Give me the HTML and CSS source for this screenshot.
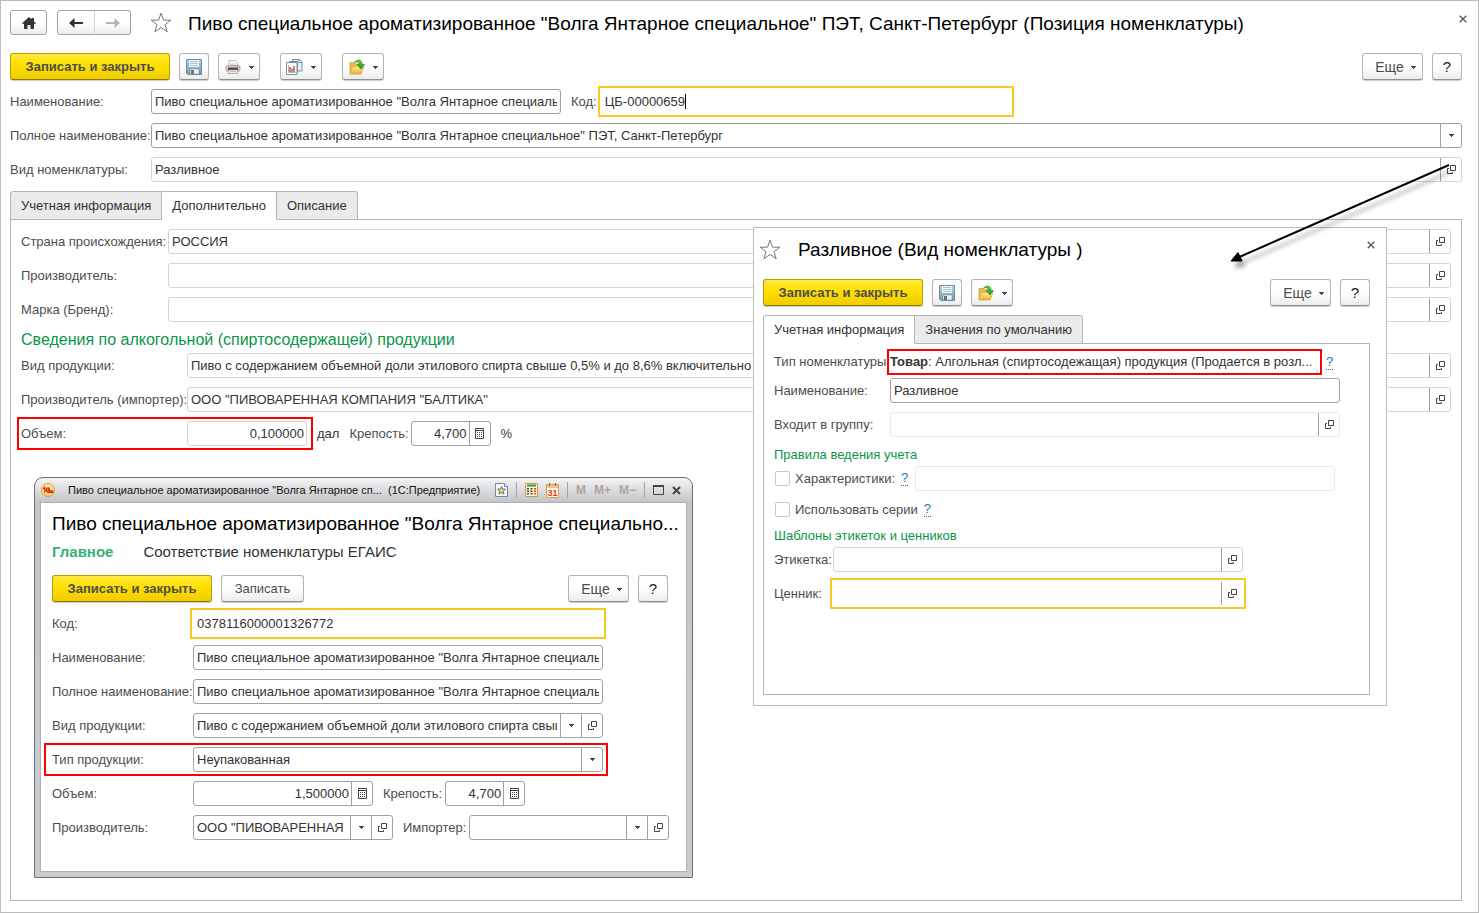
FILE: index.html
```html
<!DOCTYPE html>
<html lang="ru">
<head>
<meta charset="utf-8">
<title>Позиция номенклатуры</title>
<link rel="stylesheet" href="styles.css">
</head>
<body>
<svg class="sprite" aria-hidden="true">
  <defs>
    <linearGradient id="g-blue" x1="0" y1="0" x2="0" y2="1"><stop offset="0" stop-color="#b9d3e6"/><stop offset="1" stop-color="#6f93ad"/></linearGradient>
    <linearGradient id="g-folder" x1="0" y1="0" x2="0" y2="1"><stop offset="0" stop-color="#ffe693"/><stop offset="1" stop-color="#f2b632"/></linearGradient>
    <linearGradient id="g-green" x1="0" y1="0" x2="0" y2="1"><stop offset="0" stop-color="#6fd04a"/><stop offset="1" stop-color="#1d9a1d"/></linearGradient>
    <radialGradient id="g-logo" cx="50%" cy="35%" r="65%"><stop offset="0" stop-color="#fffbd0"/><stop offset="1" stop-color="#f8cf45"/></radialGradient>
  </defs>
  <symbol id="i-open" viewBox="0 0 9 9"><path d="M3.500 .5h5v5h-5zM2 3.500H.5v5h5V7" fill="none" stroke="#444"/></symbol>
  <symbol id="i-down" viewBox="0 0 5 3"><path d="M0 0h5v1H4v1H3v1H2V2H1V1H0z" fill="#444"/></symbol>
  <symbol id="i-calc" viewBox="0 0 9 11"><path d="M.5.500h8v10h-8zM1 2.500h7" fill="none" stroke="#444"/><path d="M2 4h1v1H2zM4 4h1v1H4zM6 4h1v1H6zM2 6h1v1H2zM4 6h1v1H4zM6 6h1v1H6zM2 8h1v1H2zM4 8h1v1H4zM6 8h1v1H6z" fill="#444"/></symbol>
  <symbol id="i-close" viewBox="0 0 8 8"><path d="M.7.700l6.600 6.600M7.300.700L.7 7.300" stroke="#555" stroke-width="1.300"/></symbol>
  <symbol id="i-star" viewBox="0 0 22 21"><path d="M11 1.200l2.500 7h7.400l-5.900 4.500 2.200 7.100L11 15.500l-6.200 4.300L7 12.700 1.100 8.200h7.400z" fill="#fff" stroke="#777" stroke-width="1"/></symbol>
  <symbol id="i-save" viewBox="0 0 16 16"><path d="M.5.500h15v15H2l-1.500-1.500z" fill="url(#g-blue)" stroke="#6d8fa6"/><path d="M3 1h10v7H3z" fill="#f4f9fc"/><path d="M4 2.500h8M4 4.500h8M4 6.500h8" stroke="#a8bfce"/><path d="M4 10h9v5H4z" fill="#f0f4f6" stroke="#7b92a2" stroke-width=".6"/><path d="M5 11h3v4H5z" fill="#5c7688"/></symbol>
  <symbol id="i-print" viewBox="0 0 16 16"><path d="M4 7V1.500h6.500L12.500 4v3" fill="#fff" stroke="#b4bac2"/><path d="M5.500 4h5M5.500 5.500h5" stroke="#c4cad2" stroke-width=".7"/><rect x="1" y="6.500" width="14" height="6" rx="2" fill="#d6d0cb" stroke="#9d9691" stroke-width=".8"/><path d="M3 8.500h10v2.500H3z" fill="#4a4745"/><path d="M4 11h8l1 3.500H3z" fill="#f6f6f6" stroke="#a09a96" stroke-width=".7"/><path d="M5 12.700h6" stroke="#e0a27a"/><circle cx="13" cy="7.800" r=".7" fill="#d8643c"/></symbol>
  <symbol id="i-report" viewBox="0 0 17 16"><path d="M6.500.500h7l2.500 2.500v9H6.500z" fill="#e9f1f7" stroke="#6d93ad"/><path d="M13 .5V3.500h3" fill="#fff" stroke="#6d93ad"/><path d="M3.500 2.500h8v11h-8z" fill="#e9f1f7" stroke="#6d93ad"/><path d="M.5 3.500h10.500v12H.5z" fill="#fff" stroke="#6d93ad"/><path d="M2.500 6v7.500h7" fill="none" stroke="#8aa5b8" stroke-width=".8"/><path d="M4 8v5" stroke="#d9372b" stroke-width="1.400"/><path d="M6 9.500V13" stroke="#3d9f3a" stroke-width="1.400"/><path d="M8 7v6" stroke="#d9372b" stroke-width="1.400"/></symbol>
  <symbol id="i-folder" viewBox="0 0 16 16"><path d="M1 3.500h4.500L7 5h5v2.500h2.500L12 15H1z" fill="#eebb48" stroke="#d29a2c" stroke-width=".7"/><path d="M1 15L3.500 7.500h11.500L12.500 13.500z" fill="url(#g-folder)" stroke="#dfac40" stroke-width=".7"/><path d="M5.500 3.200C8-.2 12.800.3 13.300 5.500h2.200L12 10 8.200 5.500h2.300C10.300 3.200 8 2.200 5.500 3.200z" fill="url(#g-green)" stroke="#198519" stroke-width=".6"/></symbol>
</svg>

<main class="page">
  <header class="topbar">
    <button class="btn btn-nav" aria-label="Начальная страница"><svg width="14" height="12" viewBox="0 0 14 12"><path d="M7 0l2.500 2.200V1H12v3.500L14 6.300 13.200 7.200 12 6.200V12H8.500V8h-3v4H2V6.200L.8 7.200 0 6.300z" fill="#333"/></svg></button>
    <div class="nav-pair">
      <button class="btn btn-nav" aria-label="Назад"><svg width="14" height="10" viewBox="0 0 14 10"><path d="M14 4H5.500V0L0 5l5.500 5V6H14z" fill="#333"/></svg></button>
      <button class="btn btn-nav" aria-label="Вперед"><svg width="14" height="10" viewBox="0 0 14 10"><path d="M0 4h8.500V0L14 5l-5.500 5V6H0z" fill="#b4b4b4"/></svg></button>
    </div>
    <svg class="star" width="22" height="21"><use href="#i-star"/></svg>
    <h1 class="title">Пиво специальное ароматизированное "Волга Янтарное специальное" ПЭТ, Санкт-Петербург (Позиция номенклатуры)</h1>
    <button class="close" aria-label="Закрыть"><svg width="8" height="8"><use href="#i-close"/></svg></button>
  </header>

  <div class="commands">
    <button class="btn btn-main">Записать и закрыть</button>
    <button class="btn btn-icon" aria-label="Сохранить"><svg width="16" height="16"><use href="#i-save"/></svg></button>
    <button class="btn btn-menu" aria-label="Печать"><svg width="16" height="16"><use href="#i-print"/></svg><svg width="5" height="3"><use href="#i-down"/></svg></button>
    <button class="btn btn-menu apart" aria-label="Отчеты"><svg width="17" height="16"><use href="#i-report"/></svg><svg width="5" height="3"><use href="#i-down"/></svg></button>
    <button class="btn btn-menu apart" aria-label="Создать на основании"><svg width="16" height="16"><use href="#i-folder"/></svg><svg width="5" height="3"><use href="#i-down"/></svg></button>
    <button class="btn btn-more">Еще<svg width="5" height="3"><use href="#i-down"/></svg></button>
    <button class="btn btn-icon">?</button>
  </div>

  <section class="rows head-rows">
    <div class="row">
      <label for="m-name">Наименование:</label>
      <div class="field w-long"><input id="m-name" value="Пиво специальное ароматизированное &quot;Волга Янтарное специальное&quot; ПЭТ, Санкт-Петербург"></div>
      <label class="inline" for="m-code">Код:</label>
      <div class="field w-long focused"><input id="m-code" value="ЦБ-00000659"><i class="caret"></i></div>
    </div>
    <div class="row">
      <label for="m-full">Полное наименование:</label>
      <div class="field grow"><input id="m-full" value="Пиво специальное ароматизированное &quot;Волга Янтарное специальное&quot; ПЭТ, Санкт-Петербург"><button aria-label="Выбрать"><svg width="5" height="3"><use href="#i-down"/></svg></button></div>
    </div>
    <div class="row">
      <label for="m-kind">Вид номенклатуры:</label>
      <div class="field grow soft"><input id="m-kind" value="Разливное"><button aria-label="Открыть"><svg width="9" height="9"><use href="#i-open"/></svg></button></div>
    </div>
  </section>

  <nav class="tabs">
    <button class="tab">Учетная информация</button>
    <button class="tab active">Дополнительно</button>
    <button class="tab">Описание</button>
  </nav>
  <section class="panel main-panel">
    <div class="rows origin-rows">
      <div class="row"><label for="p-country">Страна происхождения:</label><div class="field grow soft"><input id="p-country" value="РОССИЯ"><button aria-label="Открыть"><svg width="9" height="9"><use href="#i-open"/></svg></button></div></div>
      <div class="row"><label for="p-maker">Производитель:</label><div class="field grow soft"><input id="p-maker"><button aria-label="Открыть"><svg width="9" height="9"><use href="#i-open"/></svg></button></div></div>
      <div class="row"><label for="p-brand">Марка (Бренд):</label><div class="field grow soft"><input id="p-brand"><button aria-label="Открыть"><svg width="9" height="9"><use href="#i-open"/></svg></button></div></div>
    </div>
    <h2 class="group group-large">Сведения по алкогольной (спиртосодержащей) продукции</h2>
    <div class="rows alcohol-rows">
      <div class="row"><label for="p-type">Вид продукции:</label><div class="field grow soft"><input id="p-type" value="Пиво с содержанием объемной доли этилового спирта свыше 0,5% и до 8,6% включительно"><button aria-label="Открыть"><svg width="9" height="9"><use href="#i-open"/></svg></button></div></div>
      <div class="row"><label for="p-importer">Производитель (импортер):</label><div class="field grow soft"><input id="p-importer" value="ООО &quot;ПИВОВАРЕННАЯ КОМПАНИЯ &quot;БАЛТИКА&quot;"><button aria-label="Открыть"><svg width="9" height="9"><use href="#i-open"/></svg></button></div></div>
      <div class="row">
        <div class="row marked volume-mark"><label for="p-volume">Объем:</label><div class="field soft w-volume"><input class="num" id="p-volume" value="0,100000"></div></div>
        <span class="unit">дал</span>
        <label class="inline" for="p-strength">Крепость:</label>
        <div class="field w-num"><input class="num" id="p-strength" value="4,700"><button aria-label="Калькулятор"><svg width="9" height="11"><use href="#i-calc"/></svg></button></div>
        <span class="unit">%</span>
      </div>
    </div>
  </section>

  <section class="dialog kind-dialog">
    <header class="topbar">
      <svg class="star" width="22" height="21"><use href="#i-star"/></svg>
      <h2 class="title">Разливное (Вид номенклатуры )</h2>
      <button class="close" aria-label="Закрыть"><svg width="8" height="8"><use href="#i-close"/></svg></button>
    </header>
    <div class="commands">
      <button class="btn btn-main">Записать и закрыть</button>
      <button class="btn btn-icon" aria-label="Сохранить"><svg width="16" height="16"><use href="#i-save"/></svg></button>
      <button class="btn btn-menu" aria-label="Создать на основании"><svg width="16" height="16"><use href="#i-folder"/></svg><svg width="5" height="3"><use href="#i-down"/></svg></button>
      <button class="btn btn-more">Еще<svg width="5" height="3"><use href="#i-down"/></svg></button>
      <button class="btn btn-icon">?</button>
    </div>
    <nav class="tabs">
      <button class="tab active">Учетная информация</button>
      <button class="tab">Значения по умолчанию</button>
    </nav>
    <div class="panel kind-panel">
      <div class="row type-row"><span class="label">Тип номенклатуры:</span><span class="marked type-value"><b>Товар</b>: Алгольная (спиртосодежащая) продукция (Продается в розл...</span><a class="hint" href="#">?</a></div>
      <div class="rows">
        <div class="row"><label for="k-name">Наименование:</label><div class="field w-wide"><input id="k-name" value="Разливное"></div></div>
        <div class="row"><label for="k-group">Входит в группу:</label><div class="field faint w-wide"><input id="k-group"><button aria-label="Открыть"><svg width="9" height="9"><use href="#i-open"/></svg></button></div></div>
      </div>
      <h3 class="group">Правила ведения учета</h3>
      <div class="row check-row"><input type="checkbox" id="k-feat"><label class="inline" for="k-feat">Характеристики:</label><a class="hint" href="#">?</a><div class="field faint feature-field"><input aria-label="Характеристики"></div></div>
      <div class="row check-row series-row"><input type="checkbox" id="k-series"><label class="inline" for="k-series">Использовать серии</label><a class="hint" href="#">?</a></div>
      <h3 class="group">Шаблоны этикеток и ценников</h3>
      <div class="rows template-rows">
        <div class="row"><label for="k-label">Этикетка:</label><div class="field soft w-long"><input id="k-label"><button aria-label="Открыть"><svg width="9" height="9"><use href="#i-open"/></svg></button></div></div>
        <div class="row"><label for="k-price">Ценник:</label><div class="field w-long focused"><input id="k-price"><button aria-label="Открыть"><svg width="9" height="9"><use href="#i-open"/></svg></button></div></div>
      </div>
    </div>
  </section>

  <section class="window">
    <header class="caption">
      <svg width="14" height="14" viewBox="0 0 14 14"><circle cx="7" cy="7" r="6.500" fill="url(#g-logo)" stroke="#d8a33a"/><path d="M2 5.800L3.800 4.500V9.500M8.800 5.600C7.800 4.200 5.200 4.800 5.300 7c.1 2 1.700 2.300 3 2.300h4M8.800 6.800c-.8-.8-1.800-.4-1.800.3 0 .6.500.8 1.200.8h4" fill="none" stroke="#d8201c" stroke-width="1.300"/></svg>
      <span class="caption-text">Пиво специальное ароматизированное "Волга Янтарное сп...&nbsp; (1С:Предприятие)</span>
      <div class="caption-tools">
        <button aria-label="Избранное"><svg width="13" height="14" viewBox="0 0 13 14"><path d="M.5.500h9l3 3v10H.5z" fill="#eef5fb" stroke="#6f8ca5"/><path d="M9.500.500v3h3" fill="#fff" stroke="#6f8ca5"/><path d="M6.500 3.500l1.100 2.600 2.800.2-2.100 1.900.6 2.800-2.400-1.500L4.100 11l.6-2.800-2.100-1.900 2.800-.2z" fill="#fbd27a" stroke="#555" stroke-width=".8"/></svg></button>
        <i class="sep"></i>
        <button aria-label="Калькулятор"><svg width="13" height="14" viewBox="0 0 13 14"><path d="M.5.500h12v13H.5z" fill="#fdf1cf" stroke="#c69a5c"/><path d="M2 1.500h9v2H2z" fill="#2f9e3b"/><path d="M2 5h2v1.500H2zM5.500 5h2v1.500h-2zM2 7.500h2V9H2zM5.500 7.500h2V9h-2zM2 10h2v1.500H2zM5.500 10h2v1.500h-2z" fill="#4a4a4a"/><path d="M9 5h2v1.500H9zM9 7.500h2V9H9zM9 10h2v1.500H9z" fill="#c9482c"/></svg></button>
        <button aria-label="Календарь"><svg width="13" height="15" viewBox="0 0 13 15"><path d="M.5 1.500h12v13H.5z" fill="#fff6e2" stroke="#d09a62"/><path d="M1 2h11v3H1z" fill="#f0bd84"/><path d="M3.500 0v3M9.500 0v3" stroke="#8a6a4a"/><text x="6.500" y="13" text-anchor="middle" class="cal-day">31</text></svg></button>
        <i class="sep"></i>
        <button class="mem">M</button><button class="mem">M+</button><button class="mem">M−</button>
        <i class="sep"></i>
        <button aria-label="Развернуть"><svg width="11" height="10" viewBox="0 0 11 10"><path d="M.5 1v8.500h10V1" fill="none" stroke="#444"/><path d="M0 1h11" stroke="#444" stroke-width="2"/></svg></button>
        <button aria-label="Закрыть"><svg width="9" height="9" viewBox="0 0 9 9"><path d="M1 1l7 7M8 1L1 8" stroke="#444" stroke-width="2"/></svg></button>
      </div>
    </header>
    <div class="window-body">
      <h2 class="title">Пиво специальное ароматизированное "Волга Янтарное специально...</h2>
      <nav class="links"><a class="current" href="#">Главное</a><a href="#">Соответствие номенклатуры ЕГАИС</a></nav>
      <div class="commands">
        <button class="btn btn-main">Записать и закрыть</button>
        <button class="btn btn-plain">Записать</button>
        <button class="btn btn-more">Еще<svg width="5" height="3"><use href="#i-down"/></svg></button>
        <button class="btn btn-icon">?</button>
      </div>
      <div class="rows">
        <div class="row"><label for="w-code">Код:</label><div class="field w-long focused"><input id="w-code" value="0378116000001326772"></div></div>
        <div class="row"><label for="w-name">Наименование:</label><div class="field w-long"><input id="w-name" value="Пиво специальное ароматизированное &quot;Волга Янтарное специальное&quot; ПЭТ, Санкт-Петербург"></div></div>
        <div class="row"><label for="w-full">Полное наименование:</label><div class="field w-long"><input id="w-full" value="Пиво специальное ароматизированное &quot;Волга Янтарное специальное&quot; ПЭТ, Санкт-Петербург"></div></div>
        <div class="row"><label for="w-kind">Вид продукции:</label><div class="field w-long"><input id="w-kind" value="Пиво с содержанием объемной доли этилового спирта свыше 0,5% и до 8,6% включительно"><button aria-label="Выбрать"><svg width="5" height="3"><use href="#i-down"/></svg></button><button aria-label="Открыть"><svg width="9" height="9"><use href="#i-open"/></svg></button></div></div>
        <div class="row marked pack-row"><label for="w-pack">Тип продукции:</label><div class="field w-long"><select id="w-pack"><option>Неупакованная</option></select><span class="drop"><svg width="5" height="3"><use href="#i-down"/></svg></span></div></div>
        <div class="row"><label for="w-volume">Объем:</label><div class="field w-amount"><input class="num" id="w-volume" value="1,500000"><button aria-label="Калькулятор"><svg width="9" height="11"><use href="#i-calc"/></svg></button></div><label class="inline" for="w-strength">Крепость:</label><div class="field w-num"><input class="num" id="w-strength" value="4,700"><button aria-label="Калькулятор"><svg width="9" height="11"><use href="#i-calc"/></svg></button></div></div>
        <div class="row"><label for="w-maker">Производитель:</label><div class="field w-ref"><input id="w-maker" value="ООО &quot;ПИВОВАРЕННАЯ"><button aria-label="Выбрать"><svg width="5" height="3"><use href="#i-down"/></svg></button><button aria-label="Открыть"><svg width="9" height="9"><use href="#i-open"/></svg></button></div><label class="inline" for="w-importer">Импортер:</label><div class="field w-ref"><input id="w-importer"><button aria-label="Выбрать"><svg width="5" height="3"><use href="#i-down"/></svg></button><button aria-label="Открыть"><svg width="9" height="9"><use href="#i-open"/></svg></button></div></div>
      </div>
    </div>
  </section>

  <svg class="arrow" width="230" height="114" viewBox="0 0 230 114" aria-hidden="true"><path d="M222 5L10 98" stroke="#000" stroke-width="2"/><path d="M4 101L11 92.500 15 101z" fill="#000" stroke="#000"/></svg>
</main>
</body>
</html>
```
FILE: styles.css
```css
* { box-sizing: border-box; }
body {
  margin: 0;
  background: #fff;
  color: #333;
  font: 13px/16px "Liberation Sans", Arial, sans-serif;
}
button, input, select { font: inherit; color: inherit; margin: 0; padding: 0; }
svg { display: block; flex: none; }
.sprite { position: absolute; width: 0; height: 0; }

.page {
  position: relative;
  display: flex;
  flex-direction: column;
  min-height: 100vh;
  padding: 9px 16px 11px 9px;
  border: 1px solid #bbb;
}

/* title line */
.topbar { display: flex; align-items: center; }
.title { margin: 0; font-size: 19px; line-height: 24px; font-weight: 400; color: #000; white-space: nowrap; }
.topbar .title { padding-top: 2px; }
.topbar .star { margin: 0 16px 0 19px; }
.close { margin-left: auto; border: 0; background: none; width: 8px; height: 16px; }
.page > .topbar { margin-right: -5px; height: 25px; }
.topbar .close { margin-bottom: 8px; }

/* buttons */
.btn {
  display: inline-flex;
  align-items: center;
  justify-content: center;
  height: 27px;
  border: 1px solid #b4b4b4;
  border-bottom-color: #909090;
  border-radius: 3px;
  background: linear-gradient(#fff, #fff 50%, #ececec);
  box-shadow: 0 1px 0 #d0d0d0;
  color: #4d4d4d;
}
.btn-nav { width: 37px; height: 25px; border-color: #a0a0a0; box-shadow: none; }
.nav-pair { display: flex; margin-left: 10px; }
.nav-pair .btn:first-child { border-radius: 3px 0 0 3px; width: 38px; }
.nav-pair .btn:last-child { border-radius: 0 3px 3px 0; border-left-color: #d4d4d4; margin-left: -1px; }
.btn-main {
  width: 160px;
  border-color: #b89b00;
  border-bottom-color: #8f7800;
  background: linear-gradient(#ffea3d, #ffdf00 45%, #f0cd00);
  font-weight: 700;
}
.btn-icon { width: 30px; color: #222; font-size: 15px; }
.btn-menu { width: 42px; gap: 8px; }
.btn-more { width: 61px; gap: 7px; margin-left: auto; padding-left: 6px; font-size: 14px; }
.btn-plain { width: 83px; }
.btn-more svg, .btn-menu svg:last-child { margin-top: 2px; }
.apart { margin-left: 11px; }
.commands { display: flex; gap: 9px; }
.page > .commands { margin-top: 18px; }

/* labelled fields */
.rows { display: flex; flex-direction: column; gap: 9px; }
.row { display: flex; align-items: center; }
.row label, .label { width: 141px; flex: none; color: #4d4d4d; white-space: nowrap; }
.row label.inline { width: auto; margin-left: 10px; }
.head-rows { margin-top: 9px; }
.head-rows .inline + .field { margin-left: 4px; }
.field {
  display: flex;
  flex: none;
  height: 25px;
  border: 1px solid #a0a0a0;
  border-radius: 3px;
  background: #fff;
}
.field.grow { flex: 1; }
.field.soft { border-color: #d5d5d5; }
.field.faint { border-color: #e9e9e9; }
.field.focused { position: relative; border-color: transparent; outline: 2px solid #f9ca24; outline-offset: 1px; border-radius: 0; }
.field input, .field select {
  flex: 1;
  min-width: 0;
  padding: 0 3px;
  border: 0;
  outline: 0;
  background: none;
  appearance: none;
}
.field input.num { text-align: right; padding: 0 2px; }
.field button, .drop {
  display: flex;
  align-items: center;
  justify-content: center;
  width: 21px;
  border: 0;
  border-left: 1px solid #a0a0a0;
  background: none;
}
.caret { position: absolute; left: 83px; top: 4px; width: 1px; height: 15px; background: #000; }
.w-long { width: 410px; }
.w-wide { width: 450px; }
.w-ref { width: 200px; }
.w-amount { width: 180px; }
.w-num { width: 80px; }
.w-volume { width: 120px; }
.unit { margin-left: 10px; }

/* red frame drawn over a row */
.marked { position: relative; }
.marked::after {
  content: "";
  position: absolute;
  inset: -4px -5px -4px -8px;
  border: 2px solid #f00;
  pointer-events: none;
}
.volume-mark::after { right: -6px; left: -4px; }
.type-value::after { inset: -5px -5px -5px -3px; }

/* tabs and panels */
.tabs { display: flex; margin-top: 9px; }
.tab {
  height: 29px;
  padding: 0 10px;
  border: 1px solid #b4b4b4;
  border-left-width: 0;
  background: #ebebeb;
  white-space: nowrap;
}
.tab:first-child { border-left-width: 1px; border-top-left-radius: 3px; }
.tab:last-child { border-top-right-radius: 3px; }
.tab.active { position: relative; z-index: 1; background: #fff; border-bottom-color: #fff; }
.tabs + .panel { margin-top: -1px; }
.panel { border: 1px solid #b4b4b4; padding: 9px 10px; }
.main-panel { flex: 1; }
.origin-rows label { width: 147px; }
.alcohol-rows label { width: 166px; }
.group { margin: 0; font-size: 13px; line-height: 16px; font-weight: 400; color: #0a9648; }
.group-large { margin: 8px 0 3px; font-size: 16px; line-height: 20px; }
.alcohol-rows .inline + .field { margin-left: 2px; }

/* product kind dialog */
.dialog { position: absolute; background: #fff; border: 1px solid #bbb; }
.kind-dialog { left: 752px; top: 226px; width: 634px; padding: 9px 16px 10px 9px; }
.kind-dialog .topbar { height: 24px; margin-right: -5px; }
.kind-dialog .star { margin: 0 17px 0 -4px; }
.kind-dialog .commands { margin-top: 18px; }
.kind-panel { padding: 9px 10px 88px; }
.kind-panel .label, .kind-panel .rows label { width: 116px; }
.type-row { height: 18px; margin-bottom: 7px; }
.type-value { padding-right: 1px; width: 427px; white-space: nowrap; }
.hint { margin-left: 9px; line-height: 14px; color: #1a76bd; text-decoration: none; border-bottom: 1px dotted #1a76bd; }
.kind-panel .group { margin: 10px 0 3px; }
.check-row { height: 25px; }
.kind-panel .check-row .inline { margin-left: 5px; }
.check-row .hint { margin-left: 6px; }
.check-row input[type="checkbox"] { appearance: none; width: 15px; height: 15px; border: 1px solid #c8c8c8; border-radius: 2px; margin-left: 1px; }
.feature-field { width: 420px; margin-left: 7px; }
.series-row { margin-top: 6px; }
.kind-panel .series-row + .group { margin-top: 6px; }
.kind-panel .template-rows label { width: 59px; }

/* 1C window */
.window {
  position: absolute;
  left: 33px;
  top: 476px;
  width: 659px;
  padding: 0 5px 5px;
  border: 1px solid #6e7073;
  border-radius: 9px 9px 0 0;
  background: linear-gradient(#f4f4f4, #c4c5c8 24px, #c9cccf);
}
.caption { display: flex; align-items: center; height: 24px; font-size: 11px; color: #111; }
.caption > svg { margin: 0 13px 0 1px; }
.caption-text { white-space: nowrap; }
.caption-tools { display: flex; align-items: center; gap: 8px; margin-left: auto; margin-right: 6px; }
.caption-tools button { border: 0; background: none; }
.caption-tools .mem { font-size: 12px; font-weight: 700; color: #b0a39e; }
.sep { width: 1px; height: 16px; background: #a0a3a6; }
.cal-day { font: 700 9px "Liberation Sans", Arial, sans-serif; fill: #e03a1e; }
.window-body { background: #fff; border: 1px solid #aeb1b4; padding: 9px 18px 31px 11px; }
.links { display: flex; gap: 30px; margin: 7px 0 14px; font-size: 15px; line-height: 18px; }
.links a { color: #333; text-decoration: none; }
.links .current { color: #38b174; font-weight: 700; }
.window .rows { margin-top: 9px; }
.window .inline + .field { margin-left: 3px; }
.pack-row { width: 551px; }

.arrow { position: absolute; left: 1226px; top: 159px; filter: drop-shadow(3px 6px 2px rgba(0, 0, 0, .35)); }
```
